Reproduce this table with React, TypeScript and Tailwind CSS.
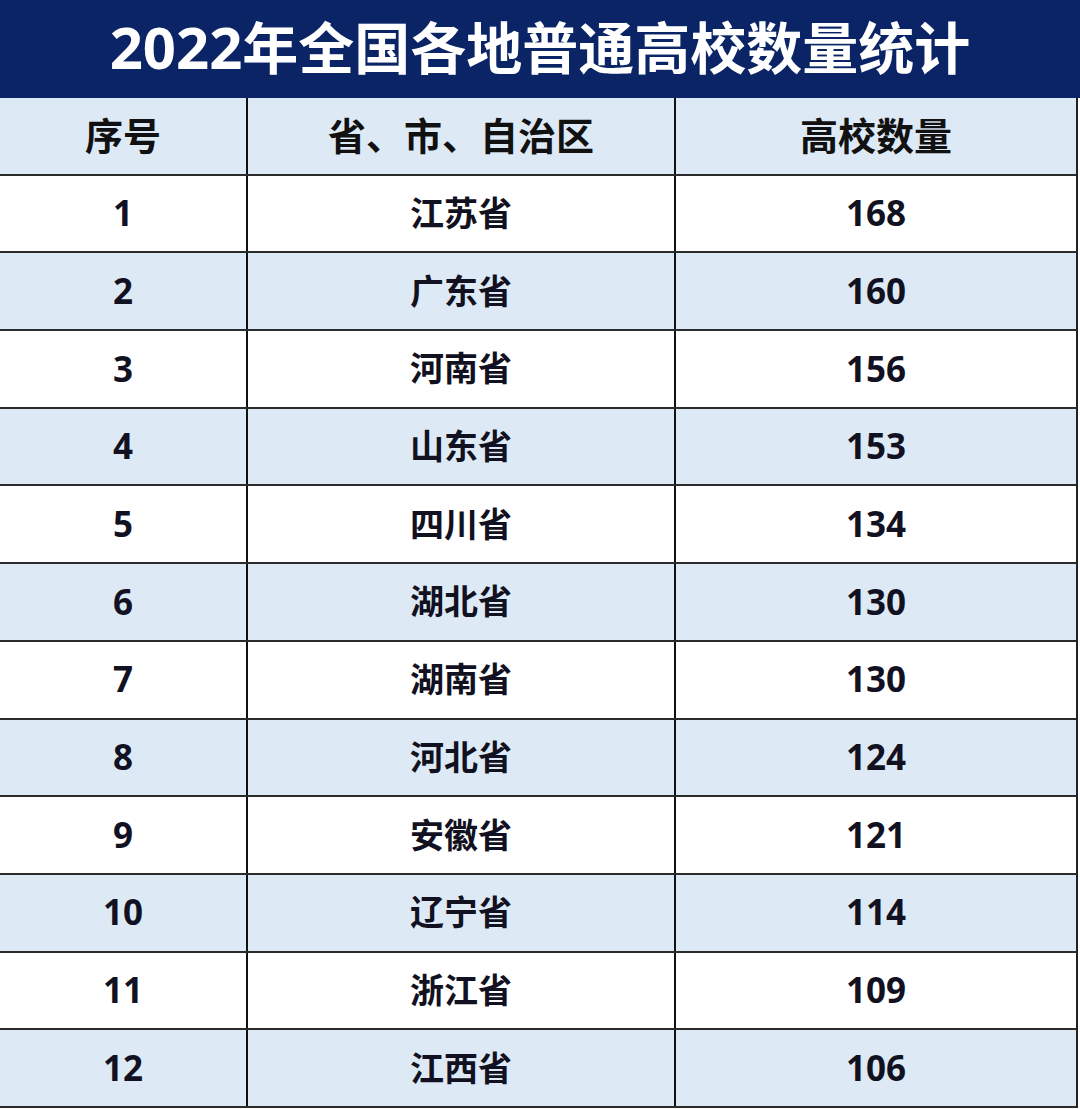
import React from 'react';

const rows = [
  { id: 1, region: '江苏省', count: 168 },
  { id: 2, region: '广东省', count: 160 },
  { id: 3, region: '河南省', count: 156 },
  { id: 4, region: '山东省', count: 153 },
  { id: 5, region: '四川省', count: 134 },
  { id: 6, region: '湖北省', count: 130 },
  { id: 7, region: '湖南省', count: 130 },
  { id: 8, region: '河北省', count: 124 },
  { id: 9, region: '安徽省', count: 121 },
  { id: 10, region: '辽宁省', count: 114 },
  { id: 11, region: '浙江省', count: 109 },
  { id: 12, region: '江西省', count: 106 },
];

const font = { fontFamily: '"Open Sans", "Noto Sans CJK SC", sans-serif' };

const App: React.FC = () => {
  return (
    <div className="w-[1080px] h-[1109px] bg-white overflow-hidden" style={font}>
      <div className="h-[98px] bg-[#0a2466] flex items-center justify-center text-white font-bold pb-[4px]">
        <span className="text-[58px] leading-none">2022</span>
        <span className="text-[56px] leading-none">年全国各地普通高校数量统计</span>
      </div>

      <div className="w-[1078px] border-r-2 border-[#222]">
        {/* header */}
        <div className="grid grid-cols-[248px_428px_1fr] h-[77.7px] bg-[#ddeaf6] border-b-2 border-[#2b2b2b] text-[38px] font-bold text-[#111]">
          <div className="flex items-center justify-center border-r-2 border-[#111]">序号</div>
          <div className="flex items-center justify-center border-r-2 border-[#111]">省、市、自治区</div>
          <div className="flex items-center justify-center">高校数量</div>
        </div>

        {rows.map((r, i) => (
          <div
            key={r.id}
            className={`grid grid-cols-[248px_428px_1fr] h-[77.7px] border-b-2 border-[#2b2b2b] text-[35px] font-bold text-[#111122] ${
              i % 2 === 1 ? 'bg-[#ddeaf6]' : 'bg-white'
            }`}
          >
            <div className="flex items-center justify-center border-r-2 border-[#111]">{r.id}</div>
            <div className="flex items-center justify-center border-r-2 border-[#111] text-[34px]">{r.region}</div>
            <div className="flex items-center justify-center">{r.count}</div>
          </div>
        ))}
      </div>
    </div>
  );
};

export default App;
